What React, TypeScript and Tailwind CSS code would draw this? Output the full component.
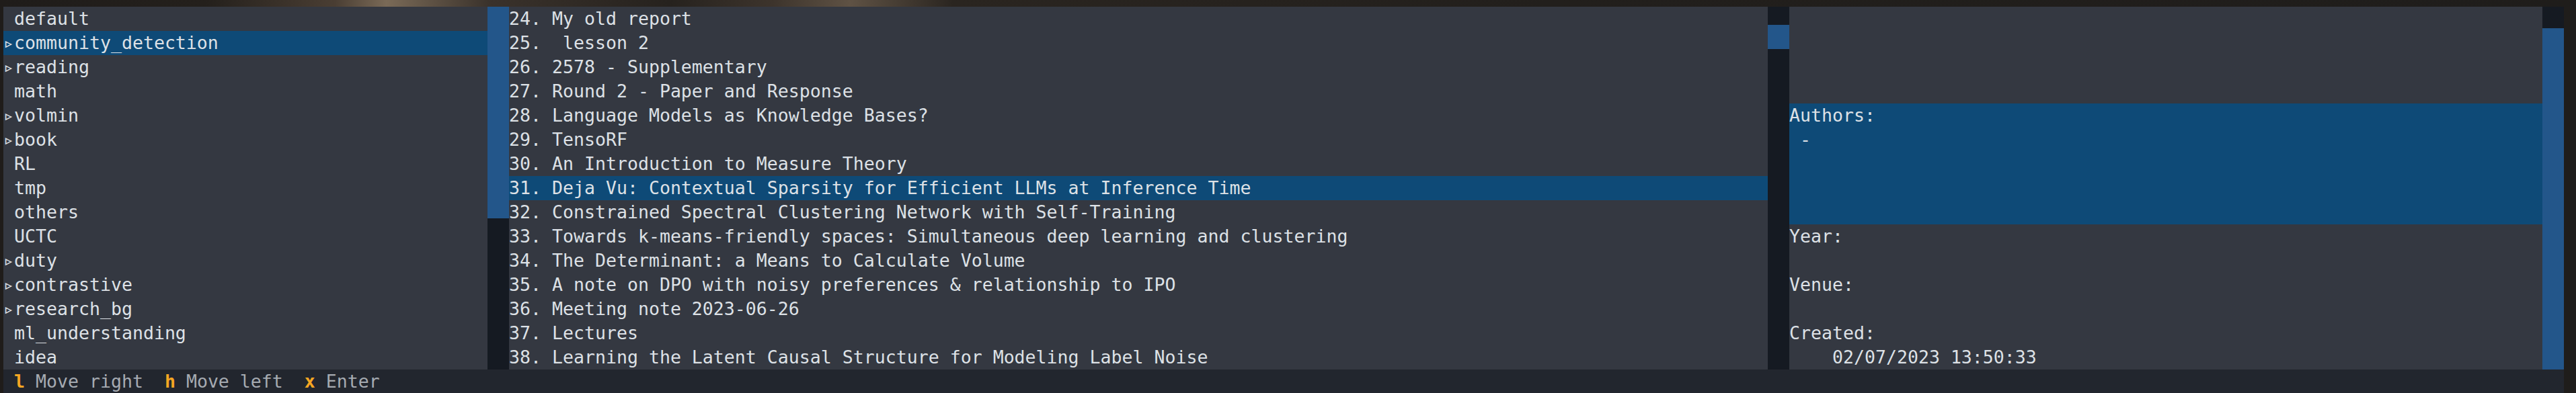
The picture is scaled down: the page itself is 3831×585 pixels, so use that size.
const mono = "font-['DejaVu_Sans_Mono','Liberation_Mono',monospace] text-[26.57px] leading-[36px]";

const folders = [
  { name: "default", sub: false },
  { name: "community_detection", sub: true },
  { name: "reading", sub: true },
  { name: "math", sub: false },
  { name: "volmin", sub: true },
  { name: "book", sub: true },
  { name: "RL", sub: false },
  { name: "tmp", sub: false },
  { name: "others", sub: false },
  { name: "UCTC", sub: false },
  { name: "duty", sub: true },
  { name: "contrastive", sub: true },
  { name: "research_bg", sub: true },
  { name: "ml_understanding", sub: false },
  { name: "idea", sub: false },
];

const papers = [
  "24. My old report",
  "25.  lesson 2",
  "26. 2578 - Supplementary",
  "27. Round 2 - Paper and Response",
  "28. Language Models as Knowledge Bases?",
  "29. TensoRF",
  "30. An Introduction to Measure Theory",
  "31. Deja Vu: Contextual Sparsity for Efficient LLMs at Inference Time",
  "32. Constrained Spectral Clustering Network with Self-Training",
  "33. Towards k-means-friendly spaces: Simultaneous deep learning and clustering",
  "34. The Determinant: a Means to Calculate Volume",
  "35. A note on DPO with noisy preferences & relationship to IPO",
  "36. Meeting note 2023-06-26",
  "37. Lectures",
  "38. Learning the Latent Causal Structure for Modeling Label Noise",
];

const details = [
  { text: "", hl: false },
  { text: "", hl: false },
  { text: "", hl: false },
  { text: "", hl: false },
  { text: "Authors:", hl: true },
  { text: " -", hl: true },
  { text: "", hl: true },
  { text: "", hl: true },
  { text: "", hl: true },
  { text: "Year:", hl: false },
  { text: "", hl: false },
  { text: "Venue:", hl: false },
  { text: "", hl: false },
  { text: "Created:", hl: false },
  { text: "    02/07/2023 13:50:33", hl: false },
];

const Row = ({ text, selected }: { text: string; selected?: boolean }) => (
  <div
    className={`h-[36px] whitespace-pre overflow-hidden ${selected ? "bg-[#0e4a77]" : ""}`}
  >
    {text}
  </div>
);

const App = () => {
  return (
    <div className="h-[585px] w-full overflow-hidden bg-[linear-gradient(90deg,#1f1c1a_0%,#24201c_8%,#4a3e33_13%,#7a6a57_15%,#3a322b_19%,#26221e_26%,#3d342c_30%,#5f5244_33%,#2a2520_37%,#221f1c_60%,#1f1d1b_100%)] pl-[5px] pr-[18px] pt-[10px]">
      <div className={`flex flex-col ${mono} text-[#dde1e6]`}>
        <div className="flex h-[540px] bg-[#343841]">
          {/* folders */}
          <div className="w-[720px] shrink-0">
            {folders.map((f, i) => (
              <Row
                key={f.name}
                text={(f.sub ? "▹" : " ") + f.name}
                selected={i === 1}
              />
            ))}
          </div>
          <div className="flex w-[32px] shrink-0 flex-col bg-[#151a22]">
            <div className="h-[315px] bg-[#23568a]" />
          </div>

          {/* papers */}
          <div className="w-[1872px] shrink-0">
            {papers.map((p, i) => (
              <Row key={p} text={p} selected={i === 7} />
            ))}
          </div>
          <div className="flex w-[32px] shrink-0 flex-col bg-[#151a22]">
            <div className="h-[27px]" />
            <div className="h-[36px] bg-[#23568a]" />
          </div>

          {/* details */}
          <div className="w-[1120px] shrink-0">
            {details.map((d, i) => (
              <Row key={i} text={d.text} selected={d.hl} />
            ))}
          </div>
          <div className="flex w-[32px] shrink-0 flex-col bg-[#151a22]">
            <div className="h-[32px]" />
            <div className="flex-1 bg-[#23568a]" />
          </div>
        </div>

        <div className="flex h-[35px] items-center whitespace-pre bg-[#22262e] leading-[35px] text-[#a6abb2]">
          <span> </span>
          <span className="font-bold text-[#f5a623]">l</span>
          <span> Move right  </span>
          <span className="font-bold text-[#f5a623]">h</span>
          <span> Move left  </span>
          <span className="font-bold text-[#f5a623]">x</span>
          <span> Enter</span>
        </div>
      </div>
    </div>
  );
};

export default App;
